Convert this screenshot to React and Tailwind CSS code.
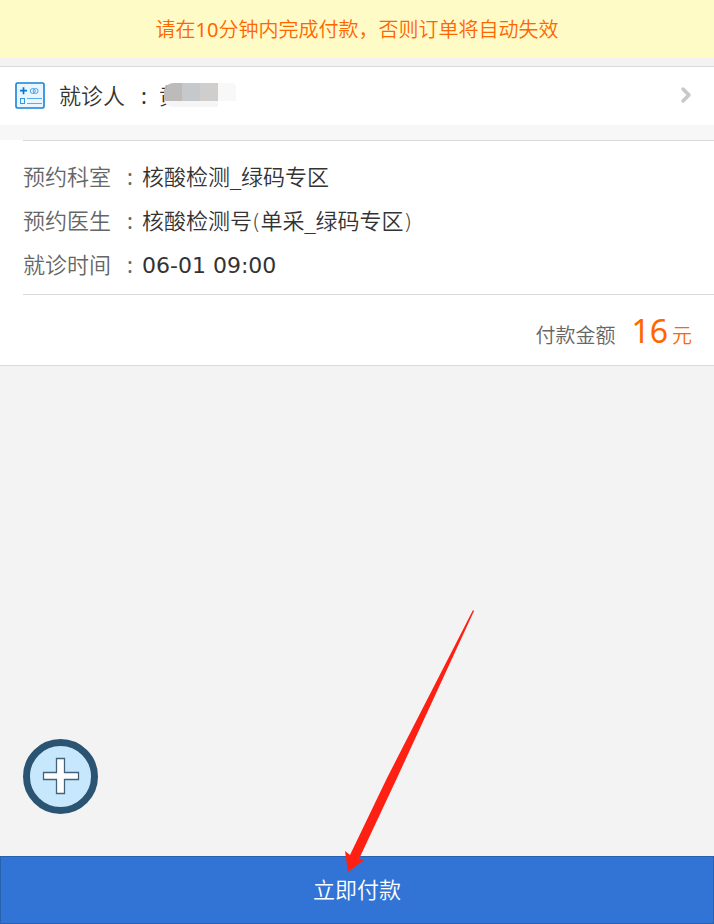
import { ChevronRight } from "lucide-react";

const BOOKING_DETAILS = [
  { label: "预约科室", value: "核酸检测_绿码专区" },
  { label: "预约医生", value: "核酸检测号(单采_绿码专区)" },
  { label: "就诊时间", value: <time className="font-normal">06-01 09:00</time> },
];

function PatientCardIcon() {
  return (
    <svg width="30" height="27" viewBox="0 0 30 27" fill="none" aria-hidden="true">
      <rect x="1" y="1" width="28" height="25" rx="1.5" fill="#eaf5fd" stroke="#1482dc" strokeWidth="1.6" />
      <path d="M5 8.7h7M8.5 5.2v7" stroke="#0878d0" strokeWidth="1.7" />
      <circle cx="17.8" cy="9" r="2.5" stroke="#4ba3e5" />
      <circle cx="20.6" cy="9" r="2.5" stroke="#4ba3e5" />
      <rect x="5.5" y="16.5" width="4" height="5" stroke="#3397e3" />
      <path d="M12 16.5h15M12 21.5h15" stroke="#5badea" />
    </svg>
  );
}

// Blocks that hide the rest of the patient's name
function NameMask() {
  return (
    <svg width="76" height="25" viewBox="0 0 76 25" className="absolute top-1 left-1" aria-hidden="true">
      <path d="M1 7Q3 1 10 0H19V18H1Z" fill="#bdbbba" />
      <path d="M19 0H37V18H19Z" fill="#c5c9cc" />
      <path d="M37 0H55V18H37Z" fill="#cfcecd" />
      <path d="M55 0H68Q73 0 73 4V18H55Z" fill="#f8f8f8" />
      <path d="M1 18H55V24H9Q3 23 1 18Z" fill="#f5f5f5" />
    </svg>
  );
}

function PointerArrow() {
  return (
    <svg
      width="130"
      height="262"
      viewBox="0 0 130 262"
      className="pointer-events-none absolute bottom-13 left-1/2 z-10 -ml-3"
      aria-hidden="true"
    >
      <path d="M128 0L129 1L52 168L14 249L19 250L3 262L0 241L5 245L42 168Z" fill="#ff2014" />
    </svg>
  );
}

export default function App() {
  return (
    <div className="relative flex min-h-screen flex-col bg-[#f3f3f3] font-['Noto_Sans','Noto_Sans_CJK_SC',sans-serif] text-[22px] font-[350] text-[#333]">
      <p className="bg-[#fffbc7] px-4 pt-[17px] pb-[15px] text-center text-xl leading-[26px] text-[#ff6600]">
        请在<span className="font-normal">10</span>分钟内完成付款，否则订单将自动失效
      </p>

      {/* Patient */}
      <button type="button" className="mt-2 flex h-[59px] items-center border-t border-[#d9d9d9] bg-white pr-4 pb-[2px] pl-[15px] text-left">
        <PatientCardIcon />
        <span className="ml-[14px] w-[82px] leading-8">就诊人</span>
        <span className="w-[18px] font-normal">:</span>
        <span className="relative leading-8">
          黄
          <NameMask />
        </span>
        <ChevronRight size={24} strokeWidth={3.5} className="ml-auto text-[#c7c7cc]" />
      </button>

      <div className="h-[15px] bg-[#f7f7f7]" />

      {/* Booking and amount */}
      <section className="border-b border-[#d9d9d9] bg-white pl-[23px]">
        <dl className="border-y border-[#d9d9d9] pt-[13px] pb-2">
          {BOOKING_DETAILS.map(({ label, value }) => (
            <div key={label} className="flex h-11 items-baseline leading-[44px]">
              <dt className="flex w-[119px] shrink-0 text-[#666]">
                <span className="w-[104px]">{label}</span>
                <span className="font-normal">:</span>
              </dt>
              <dd className="font-['DejaVu_Sans','Noto_Sans_CJK_SC',sans-serif]">{value}</dd>
            </div>
          ))}
        </dl>
        <div className="flex h-[70px] items-baseline justify-end pt-3 pr-[22px] text-xl text-[#ff6600]">
          <span className="mr-4 text-[#666]">付款金额</span>
          <span className="mr-1 text-[32px] leading-12 font-normal">16</span>
          <span>元</span>
        </div>
      </section>

      <div className="mt-auto pb-[42px] pl-[23px]">
        <button type="button" aria-label="更多" className="block rounded-full">
          <svg width="75" height="75" viewBox="0 0 75 75" aria-hidden="true">
            <circle cx="37.5" cy="37.5" r="34" fill="#c7e8fc" stroke="#2b5473" strokeWidth="7" />
            <path
              d="M33.5 19.5h8v14h14v7h-14v14h-8v-14h-13v-7h13Z"
              fill="#fff"
              stroke="#42637e"
              strokeWidth="1.3"
            />
          </svg>
        </button>
      </div>

      <button type="button" className="h-17 border border-[#2862ad] bg-[#3274d6] pb-[2px] text-white">
        立即付款
      </button>

      <PointerArrow />
    </div>
  );
}
